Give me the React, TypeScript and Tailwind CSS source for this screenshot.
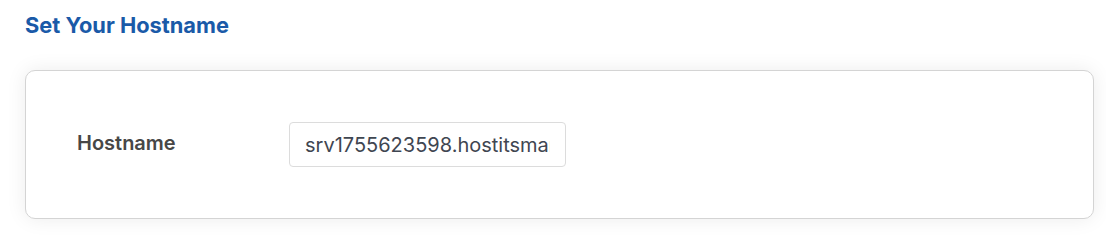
import React from 'react';

const HostnameSettings: React.FC = () => {
  return (
    <div className="min-h-[245px] bg-white pl-[25px] pr-[12px] pt-[11px]" style={{ fontFamily: 'Inter, "Noto Sans", sans-serif' }}>
      <h2 className="text-[21.8px] font-bold leading-[28px] text-[#1a5aa8]">Set Your Hostname</h2>

      <div className="mt-[31px] flex h-[149px] items-center rounded-[10px] border border-[#d4d4d4] bg-white pl-[51px] shadow-[0_0_20px_rgba(0,0,0,0.08)]">
        <label className="mb-[3px] w-[212px] text-[20px] font-semibold text-[#474747]">Hostname</label>
        <input
          type="text"
          readOnly
          value="srv1755623598.hostitsmart.com"
          className="h-[45px] w-[277px] rounded-[4px] border border-[#dcdcdc] bg-white px-[15px] text-[20px] text-[#3f4651] outline-none"
        />
      </div>
    </div>
  );
};

export default function App() {
  return <HostnameSettings />;
}
